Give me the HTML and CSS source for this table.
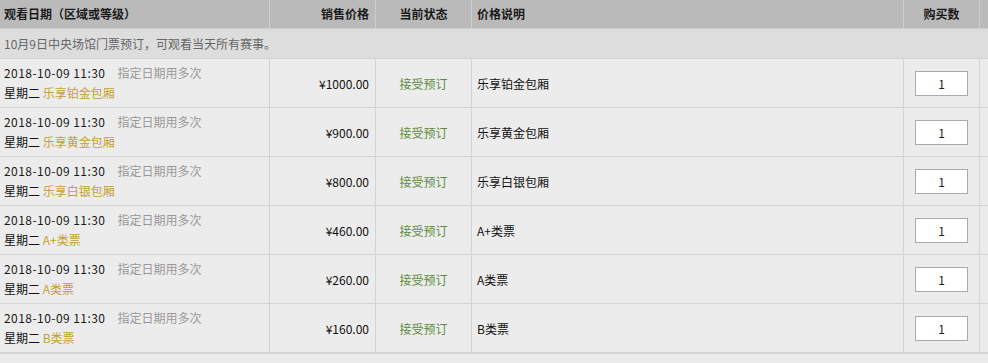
FILE: index.html
```html
<!DOCTYPE html>
<html lang="zh-CN">
<head>
<meta charset="utf-8">
<title>票价</title>
<link rel="stylesheet" href="styles.css">
</head>
<body>
<table class="tickets">
  <thead>
    <tr>
      <th class="c-date">观看日期（区域或等级）</th>
      <th class="c-price">销售价格</th>
      <th class="c-state">当前状态</th>
      <th class="c-desc">价格说明</th>
      <th class="c-qty">购买数</th>
      <th class="c-extra"></th>
    </tr>
  </thead>
  <tbody>
    <tr class="note-row">
      <td colspan="6">10月9日中央场馆门票预订，可观看当天所有赛事。</td>
    </tr>
    <tr>
      <td class="c-date"><div><span class="dt">2018-10-09 11:30</span><span class="usage">指定日期用多次</span></div><div>星期二 <span class="level">乐享铂金包厢</span></div></td>
      <td class="c-price">¥1000.00</td>
      <td class="c-state">接受预订</td>
      <td class="c-desc">乐享铂金包厢</td>
      <td class="c-qty"><input class="qty" type="text" value="1"></td>
      <td class="c-extra"></td>
    </tr>
    <tr>
      <td class="c-date"><div><span class="dt">2018-10-09 11:30</span><span class="usage">指定日期用多次</span></div><div>星期二 <span class="level">乐享黄金包厢</span></div></td>
      <td class="c-price">¥900.00</td>
      <td class="c-state">接受预订</td>
      <td class="c-desc">乐享黄金包厢</td>
      <td class="c-qty"><input class="qty" type="text" value="1"></td>
      <td class="c-extra"></td>
    </tr>
    <tr>
      <td class="c-date"><div><span class="dt">2018-10-09 11:30</span><span class="usage">指定日期用多次</span></div><div>星期二 <span class="level">乐享白银包厢</span></div></td>
      <td class="c-price">¥800.00</td>
      <td class="c-state">接受预订</td>
      <td class="c-desc">乐享白银包厢</td>
      <td class="c-qty"><input class="qty" type="text" value="1"></td>
      <td class="c-extra"></td>
    </tr>
    <tr>
      <td class="c-date"><div><span class="dt">2018-10-09 11:30</span><span class="usage">指定日期用多次</span></div><div>星期二 <span class="level">A+类票</span></div></td>
      <td class="c-price">¥460.00</td>
      <td class="c-state">接受预订</td>
      <td class="c-desc">A+类票</td>
      <td class="c-qty"><input class="qty" type="text" value="1"></td>
      <td class="c-extra"></td>
    </tr>
    <tr>
      <td class="c-date"><div><span class="dt">2018-10-09 11:30</span><span class="usage">指定日期用多次</span></div><div>星期二 <span class="level">A类票</span></div></td>
      <td class="c-price">¥260.00</td>
      <td class="c-state">接受预订</td>
      <td class="c-desc">A类票</td>
      <td class="c-qty"><input class="qty" type="text" value="1"></td>
      <td class="c-extra"></td>
    </tr>
    <tr class="last">
      <td class="c-date"><div><span class="dt">2018-10-09 11:30</span><span class="usage">指定日期用多次</span></div><div>星期二 <span class="level">B类票</span></div></td>
      <td class="c-price">¥160.00</td>
      <td class="c-state">接受预订</td>
      <td class="c-desc">B类票</td>
      <td class="c-qty"><input class="qty" type="text" value="1"></td>
      <td class="c-extra"></td>
    </tr>
  </tbody>
</table>
</body>
</html>
```
FILE: styles.css
```css
html {
  overflow: hidden;
  background: #ebebeb;
}
body {
  margin: 0;
  background: #ebebeb;
  font-family: "Microsoft YaHei", "Noto Sans CJK SC", "Noto Sans", sans-serif;
  font-size: 12px;
  color: #222;
}
.tickets {
  table-layout: fixed;
  border-collapse: separate;
  border-spacing: 0;
  width: 1020px;
}
.tickets th,
.tickets td {
  box-sizing: border-box;
  padding: 0;
  border-right: 1px solid #d4d4d4;
  border-bottom: 1px solid #d4d4d4;
  vertical-align: middle;
}
.tickets th {
  height: 29px;
  line-height: 28px;
  background: #bababa;
  font-weight: bold;
  color: #1a1a1a;
  border-right-color: #cdcdcd;
  border-bottom-color: #cdcdcd;
}
th.c-date { width: 270px; text-align: left; padding-left: 4px; }
th.c-price { width: 106px; text-align: right; padding-right: 6px; }
th.c-state { width: 96px; text-align: center; }
th.c-desc { width: 432px; text-align: left; padding-left: 5px; }
th.c-qty { width: 76px; text-align: center; }
th.c-extra { width: 40px; }

.note-row td {
  height: 30px;
  background: #dddddd;
  color: #666;
  padding-left: 4px;
  border-right: none;
}

tbody tr td {
  background: #ececec;
}
tbody tr:not(.note-row) td {
  height: 49px;
}
td.c-date {
  padding: 4px 0 4px 4px;
  line-height: 20px;
  color: #111;
}
.dt {
  letter-spacing: 0.45px;
  margin-right: 12px;
  color: #1a1a1a;
}
.usage {
  color: #999;
}
.level {
  color: #c4a032;
}
td.c-price {
  text-align: right;
  padding-right: 6px;
  color: #111;
}
td.c-state {
  text-align: center;
  color: #5d8c3c;
}
td.c-desc {
  padding-left: 5px;
  color: #111;
}
td.c-qty {
  text-align: center;
}
.qty {
  box-sizing: border-box;
  width: 53px;
  height: 25px;
  margin: 0;
  border: 1px solid #aaaaaa;
  background: #fff;
  text-align: center;
  font-family: "Microsoft YaHei", "Noto Sans CJK SC", sans-serif;
  font-size: 12px;
  color: #222;
  padding: 0;
  vertical-align: middle;
}
tr.last td {
  border-bottom: 2px solid #d4d4d4;
  height: 50px;
}
```
